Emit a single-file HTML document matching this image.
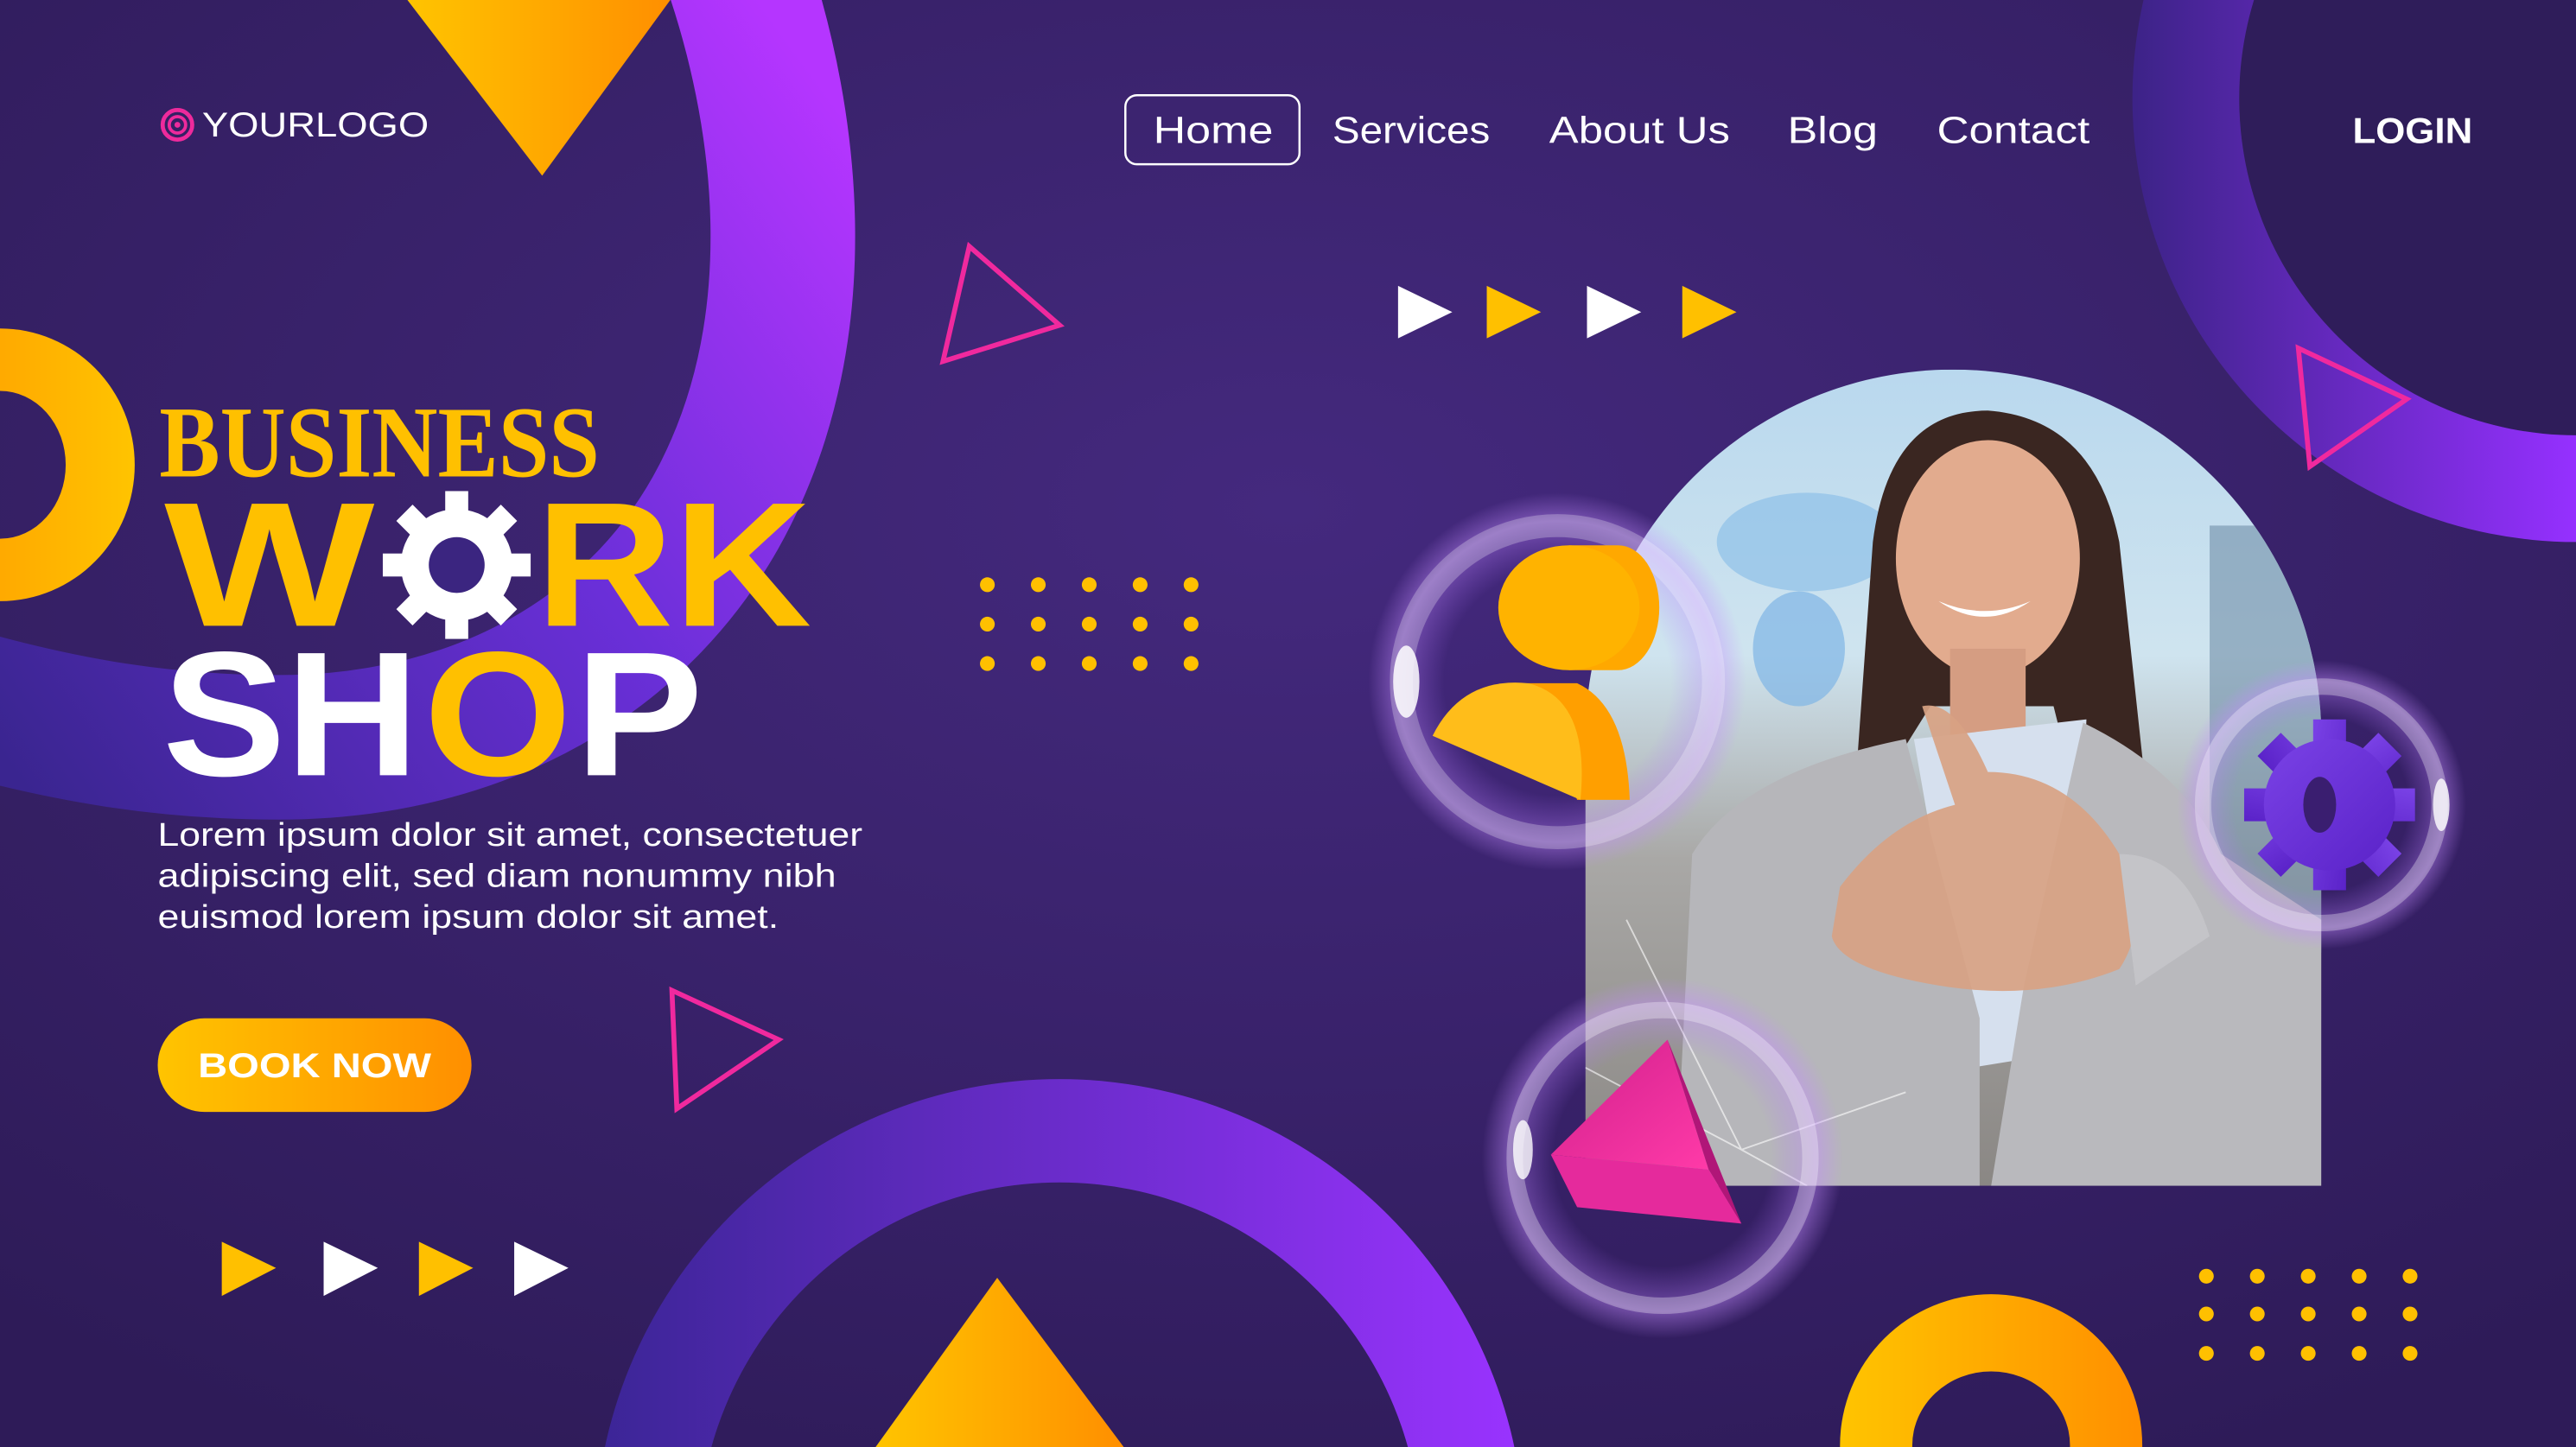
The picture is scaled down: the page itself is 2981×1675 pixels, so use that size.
<!DOCTYPE html>
<html><head><meta charset="utf-8"><style>
html,body{margin:0;padding:0;background:#33205f;overflow:hidden;width:2981px;height:1675px}
svg{display:block;overflow:hidden}
</style></head><body>
<svg width="2981" height="1675" viewBox="0 0 1568 881" preserveAspectRatio="none" xmlns="http://www.w3.org/2000/svg">
<defs>
<radialGradient id="bg" cx="0.5" cy="0.35" r="0.75">
<stop offset="0" stop-color="#44297e"/><stop offset="1" stop-color="#2e1b58"/></radialGradient>
<linearGradient id="ring1" gradientUnits="userSpaceOnUse" x1="0" y1="460" x2="520" y2="80">
<stop offset="0" stop-color="#3a2590"/><stop offset="0.55" stop-color="#6a2fd8"/><stop offset="1" stop-color="#b535ff"/></linearGradient>
<linearGradient id="ring2" x1="0" y1="0" x2="1" y2="0">
<stop offset="0" stop-color="#3b2596"/><stop offset="1" stop-color="#9a33ff"/></linearGradient>
<linearGradient id="ring3" gradientUnits="userSpaceOnUse" x1="1300" y1="0" x2="1568" y2="0">
<stop offset="0" stop-color="#3d2388"/><stop offset="1" stop-color="#9530ff"/></linearGradient>
<linearGradient id="org" x1="0" y1="0" x2="1" y2="0">
<stop offset="0" stop-color="#ffc400"/><stop offset="1" stop-color="#ff8f00"/></linearGradient>
<linearGradient id="org2" x1="1" y1="0" x2="0" y2="0">
<stop offset="0" stop-color="#ffc400"/><stop offset="1" stop-color="#ff8f00"/></linearGradient>
<linearGradient id="photo" x1="0" y1="0" x2="0" y2="1">
<stop offset="0" stop-color="#b9d8ee"/><stop offset="0.35" stop-color="#cfe4ef"/><stop offset="0.6" stop-color="#a9a8a6"/><stop offset="1" stop-color="#8a8784"/></linearGradient>
<radialGradient id="glow" cx="0.5" cy="0.5" r="0.5">
<stop offset="0.6" stop-color="#b070ff" stop-opacity="0"/><stop offset="0.85" stop-color="#c48cff" stop-opacity="0.45"/><stop offset="1" stop-color="#c48cff" stop-opacity="0"/></radialGradient>
<linearGradient id="pink" x1="0" y1="0" x2="1" y2="1">
<stop offset="0" stop-color="#d0208c"/><stop offset="1" stop-color="#ff3aa8"/></linearGradient>
<linearGradient id="gear" x1="0" y1="0" x2="1" y2="1">
<stop offset="0" stop-color="#7a42e6"/><stop offset="1" stop-color="#5a22c8"/></linearGradient>
<clipPath id="arch"><path d="M965 449 A224 224 0 0 1 1413 449 L1413 722 L965 722 Z"/></clipPath>
</defs>
<rect width="1568" height="881" fill="url(#bg)"/>

<path d="M448,-20 C482,80 492,200 442,300 C392,400 290,455 170,455 C100,455 40,445 -30,425" fill="none" stroke="url(#ring1)" stroke-width="88"/>
<polygon points="248,0 408,0 330,107" fill="url(#org)"/>
<path fill-rule="evenodd" fill="url(#org2)" d="M-82 283 A82 83 0 1 0 82 283 A82 83 0 1 0 -82 283 Z M-40 283 A40 45 0 1 1 40 283 A40 45 0 1 1 -40 283 Z"/>

<circle cx="1568" cy="60" r="205" fill="#2f1d5a"/>
<path fill-rule="evenodd" fill="url(#ring3)" d="M1298 60 A270 270 0 1 0 1838 60 A270 270 0 1 0 1298 60 Z M1363 60 A205 205 0 1 1 1773 60 A205 205 0 1 1 1363 60 Z"/>
<polygon points="1399,212 1465,243 1406,284" fill="none" stroke="#f0299e" stroke-width="3"/>

<path fill-rule="evenodd" fill="url(#ring2)" d="M362 940 A283 283 0 1 1 928 940 A283 283 0 1 1 362 940 Z M425 940 A220 220 0 1 0 865 940 A220 220 0 1 0 425 940 Z"/>
<polygon points="533,881 607,778 684,881" fill="url(#org)"/>

<path fill-rule="evenodd" fill="url(#org)" d="M1120 880 A92 92 0 1 1 1304 880 A92 92 0 1 1 1120 880 Z M1164 880 A48 45 0 1 0 1260 880 A48 45 0 1 0 1164 880 Z"/>

<polygon points="590,150 645,198 574,220" fill="none" stroke="#f0299e" stroke-width="3"/>
<polygon points="409,603 474,633 412,675" fill="none" stroke="#f0299e" stroke-width="3"/>

<g>
<polygon points="851,174 884,190 851,206" fill="#fff"/>
<polygon points="905,174 938,190 905,206" fill="#ffc000"/>
<polygon points="966,174 999,190 966,206" fill="#fff"/>
<polygon points="1024,174 1057,190 1024,206" fill="#ffc000"/>
<polygon points="135,756 168,772 135,789" fill="#ffc000"/>
<polygon points="197,756 230,772 197,789" fill="#fff"/>
<polygon points="255,756 288,772 255,789" fill="#ffc000"/>
<polygon points="313,756 346,772 313,789" fill="#fff"/>
</g>

<g fill="#ffc000">
<circle cx="601" cy="356" r="4.5"/><circle cx="632" cy="356" r="4.5"/><circle cx="663" cy="356" r="4.5"/><circle cx="694" cy="356" r="4.5"/><circle cx="725" cy="356" r="4.5"/>
<circle cx="601" cy="380" r="4.5"/><circle cx="632" cy="380" r="4.5"/><circle cx="663" cy="380" r="4.5"/><circle cx="694" cy="380" r="4.5"/><circle cx="725" cy="380" r="4.5"/>
<circle cx="601" cy="404" r="4.5"/><circle cx="632" cy="404" r="4.5"/><circle cx="663" cy="404" r="4.5"/><circle cx="694" cy="404" r="4.5"/><circle cx="725" cy="404" r="4.5"/>
<circle cx="1343" cy="777" r="4.5"/><circle cx="1374" cy="777" r="4.5"/><circle cx="1405" cy="777" r="4.5"/><circle cx="1436" cy="777" r="4.5"/><circle cx="1467" cy="777" r="4.5"/>
<circle cx="1343" cy="800" r="4.5"/><circle cx="1374" cy="800" r="4.5"/><circle cx="1405" cy="800" r="4.5"/><circle cx="1436" cy="800" r="4.5"/><circle cx="1467" cy="800" r="4.5"/>
<circle cx="1343" cy="824" r="4.5"/><circle cx="1374" cy="824" r="4.5"/><circle cx="1405" cy="824" r="4.5"/><circle cx="1436" cy="824" r="4.5"/><circle cx="1467" cy="824" r="4.5"/>
</g>

<circle cx="108" cy="76" r="9" fill="none" stroke="#ee2a9c" stroke-width="2.5"/>
<circle cx="108" cy="76" r="5" fill="none" stroke="#ee2a9c" stroke-width="2"/>
<circle cx="108" cy="76" r="1.8" fill="#ee2a9c"/>
<text x="123" y="83" font-family="Liberation Sans, sans-serif" font-size="21" fill="#fff" textLength="138" lengthAdjust="spacingAndGlyphs">YOURLOGO</text>
<rect x="685" y="58" width="106" height="42" rx="7" fill="none" stroke="#fff" stroke-width="1.3"/>
<g font-family="Liberation Sans, sans-serif" font-size="23" fill="#fff">
<text x="702" y="87" textLength="73" lengthAdjust="spacingAndGlyphs">Home</text>
<text x="811" y="87" textLength="96" lengthAdjust="spacingAndGlyphs">Services</text>
<text x="943" y="87" textLength="110" lengthAdjust="spacingAndGlyphs">About Us</text>
<text x="1088" y="87" textLength="55" lengthAdjust="spacingAndGlyphs">Blog</text>
<text x="1179" y="87" textLength="93" lengthAdjust="spacingAndGlyphs">Contact</text>
<text x="1432" y="87" font-weight="bold" font-size="22" textLength="73" lengthAdjust="spacingAndGlyphs">LOGIN</text>
</g>

<text x="97" y="290" font-family="Liberation Serif, serif" font-weight="bold" font-size="62" fill="#ffc000" textLength="268" lengthAdjust="spacingAndGlyphs">BUSINESS</text>
<g font-family="Liberation Sans, sans-serif" font-weight="bold" font-size="108">
<text x="100" y="381" fill="#ffc000" textLength="128" lengthAdjust="spacingAndGlyphs">W</text>
<text x="326" y="381" fill="#ffc000" textLength="168" lengthAdjust="spacingAndGlyphs">RK</text>
<text x="99" y="472" fill="#fff" textLength="156" lengthAdjust="spacingAndGlyphs">SH</text>
<text x="258" y="472" fill="#ffc000" textLength="90" lengthAdjust="spacingAndGlyphs">O</text>
<text x="350" y="472" fill="#fff" textLength="78" lengthAdjust="spacingAndGlyphs">P</text>
</g>
<g transform="translate(278,344)" fill="#fff">
<rect x="-7" y="-45" width="14" height="90"/>
<rect x="-7" y="-45" width="14" height="90" transform="rotate(45)"/>
<rect x="-7" y="-45" width="14" height="90" transform="rotate(90)"/>
<rect x="-7" y="-45" width="14" height="90" transform="rotate(135)"/>
<circle r="34"/>
<circle r="17" fill="#3b2580"/>
</g>

<g font-family="Liberation Sans, sans-serif" font-size="20" fill="#fff">
<text x="96" y="515" textLength="429" lengthAdjust="spacingAndGlyphs">Lorem ipsum dolor sit amet, consectetuer</text>
<text x="96" y="540" textLength="413" lengthAdjust="spacingAndGlyphs">adipiscing elit, sed diam nonummy nibh</text>
<text x="96" y="565" textLength="378" lengthAdjust="spacingAndGlyphs">euismod lorem ipsum dolor sit amet.</text>
</g>
<rect x="96" y="620" width="191" height="57" rx="28.5" fill="url(#org)"/>
<text x="191.5" y="656" text-anchor="middle" font-family="Liberation Sans, sans-serif" font-weight="bold" font-size="21" fill="#fff" textLength="142" lengthAdjust="spacingAndGlyphs">BOOK NOW</text>

<g clip-path="url(#arch)">
<rect x="965" y="225" width="448" height="497" fill="url(#photo)"/>
<ellipse cx="1100" cy="330" rx="55" ry="30" fill="#8ec0e8" opacity="0.7"/>
<ellipse cx="1095" cy="395" rx="28" ry="35" fill="#7fb5e6" opacity="0.7"/>
<rect x="1345" y="320" width="75" height="260" fill="#6f8da6" opacity="0.6"/>
<path d="M1140 330 Q1150 250 1210 250 Q1275 255 1290 330 L1305 470 L1260 470 L1250 430 L1175 430 L1150 470 L1130 470 Z" fill="#3a2621"/>
<ellipse cx="1210" cy="340" rx="56" ry="72" fill="#e2ab8e"/>
<rect x="1187" y="395" width="46" height="55" fill="#d59d82"/>
<path d="M1180 366 Q1208 385 1236 366 Q1208 378 1180 366 Z" fill="#fff"/>
<path d="M1165 450 L1270 438 L1262 640 L1200 650 Z" fill="#d6e0ee"/>
<path d="M1020 722 L1030 520 Q1060 470 1160 450 L1205 620 L1205 722 Z" fill="#b6b6ba"/>
<path d="M1212 722 L1232 600 L1268 440 Q1330 470 1352 520 L1413 560 L1413 722 Z" fill="#b9b9bd"/>
<path d="M1120 540 Q1150 500 1190 490 L1170 430 Q1190 425 1210 470 Q1260 470 1290 520 Q1310 560 1290 590 Q1240 610 1180 600 Q1120 590 1115 570 Z" fill="#d8a283" opacity="0.92"/>
<path d="M1290 520 Q1330 520 1345 570 L1300 600 Z" fill="#c4c4c8"/>
<g stroke="#fff" stroke-opacity="0.6" stroke-width="1" fill="none">
<path d="M965 650 L1060 700 L1160 665 M990 560 L1060 700 M1060 700 L1100 722"/>
</g>
</g>

<circle cx="948" cy="415" r="115" fill="url(#glow)"/>
<circle cx="948" cy="415" r="95" fill="none" stroke="#fff" stroke-opacity="0.25" stroke-width="14"/>
<ellipse cx="856" cy="415" rx="8" ry="22" fill="#fff" opacity="0.85"/>
<circle cx="1413" cy="490" r="88" fill="url(#glow)"/>
<circle cx="1413" cy="490" r="72" fill="none" stroke="#fff" stroke-opacity="0.3" stroke-width="10"/>
<ellipse cx="1486" cy="490" rx="5" ry="16" fill="#fff" opacity="0.8"/>
<circle cx="1012" cy="705" r="110" fill="url(#glow)"/>
<circle cx="1012" cy="705" r="90" fill="none" stroke="#fff" stroke-opacity="0.3" stroke-width="10"/>
<ellipse cx="927" cy="700" rx="6" ry="18" fill="#fff" opacity="0.8"/>

<path d="M955 332 L985 332 A25 38 0 0 1 985 408 L955 408 Z" fill="#ffa800"/>
<ellipse cx="955" cy="370" rx="43" ry="38" fill="#ffb300"/>
<path d="M930 416 L960 416 Q990 430 992 487 L960 487 Z" fill="#ff9f00"/>
<path d="M872 448 Q890 412 930 416 Q968 425 962 487 Z" fill="#ffbd1a"/>

<g transform="translate(1418,490)" fill="url(#gear)">
<rect x="-10" y="-52" width="20" height="104"/>
<rect x="-10" y="-52" width="20" height="104" transform="rotate(45)"/>
<rect x="-10" y="-52" width="20" height="104" transform="rotate(90)"/>
<rect x="-10" y="-52" width="20" height="104" transform="rotate(135)"/>
<circle r="40"/>
<ellipse cx="-6" rx="10" ry="17" fill="#3a1e70"/>
</g>

<polygon points="1015,633 944,703 1040,712" fill="url(#pink)"/>
<polygon points="1015,633 1040,712 1060,745" fill="#b01678"/>
<polygon points="944,703 1040,712 1060,745 960,735" fill="#e52a9c"/>
</svg>
</body></html>
